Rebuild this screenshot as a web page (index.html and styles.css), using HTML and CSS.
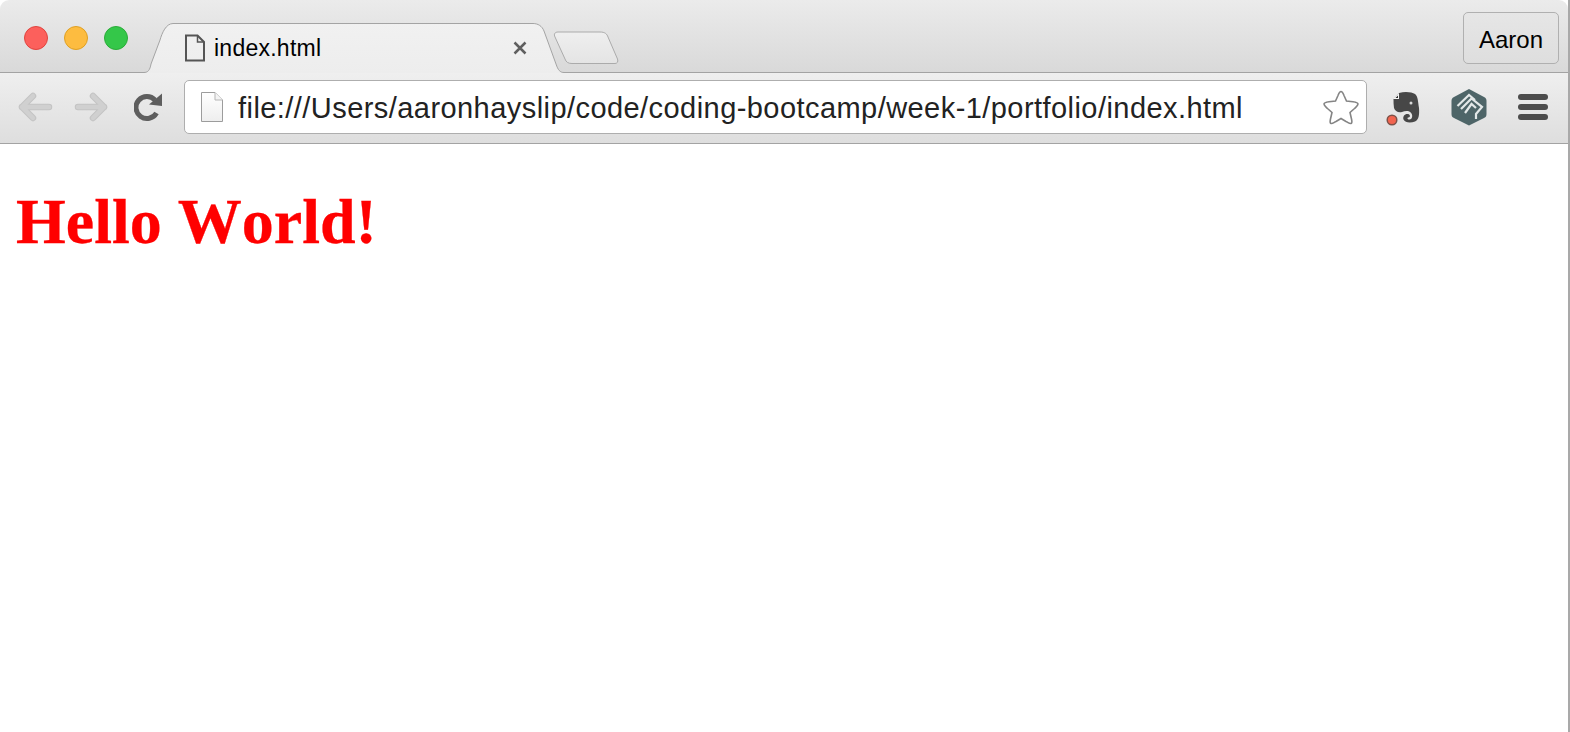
FILE: index.html

```html
<!doctype html>
<html lang="en">

<head>
  <meta charset="utf-8">
  <title>Hello World!</title>
  <link rel="stylesheet" href="styles.css">
</head>

<body>
  <div class="window">
    <header class="tabstrip">
      <div class="lights">
        <span class="light red"></span>
        <span class="light yellow"></span>
        <span class="light green"></span>
      </div>

      <div class="tab">
        <svg class="tab-shape" width="420" height="50" viewBox="0 0 420 50">
          <defs>
            <linearGradient id="tabfill" x1="0" y1="0" x2="0" y2="1">
              <stop offset="0" stop-color="#f1f1f1"/>
              <stop offset="1" stop-color="#ededed"/>
            </linearGradient>
          </defs>
          <path d="M0 50 V49.500 C4 49.500 6 47 7 41 L16 17 C18 10 22 .5 29 .5 L389 .5 C394 .5 398 3 400 8 L412 41 C414 47 416 49.500 420 49.500 V50 Z" fill="url(#tabfill)"/>
          <path d="M0 49.500 C4 49.500 6 47 7 41 L16 17 C18 10 22 .5 29 .5 L389 .5 C394 .5 398 3 400 8 L412 41 C414 47 416 49.500 420 49.500" fill="none" stroke="#a4a4a4"/>
        </svg>
        <svg class="tab-icon" width="22" height="28" viewBox="0 0 22 28">
          <path d="M2 1.500 H13.500 L20 8 V26.500 H2 Z" fill="none" stroke="#555" stroke-width="2"/>
          <path d="M13.500 1.500 V8 H20" fill="none" stroke="#555" stroke-width="1.500"/>
        </svg>
        <span class="tab-title">index.html</span>
        <svg class="tab-close" width="14" height="14" viewBox="0 0 14 14">
          <path d="M1.500 1.500 L12.500 12.500 M12.500 1.500 L1.500 12.500" stroke="#5f5f5f" stroke-width="2.500"/>
        </svg>
      </div>

      <svg class="newtab" width="66" height="34" viewBox="0 0 66 34">
        <defs>
          <linearGradient id="newfill" x1="0" y1="0" x2="0" y2="1">
            <stop offset="0" stop-color="#efefef"/>
            <stop offset="1" stop-color="#e4e4e4"/>
          </linearGradient>
        </defs>
        <path d="M5 1 H47 C52 1 54 3 55 6 L64.500 28 C65.500 31 64 32.500 62 32.500 H19 C15 32.500 13 31 12 28 L2 6 C.5 3 2 1 5 1 Z" fill="url(#newfill)" stroke="#ababab"/>
      </svg>

      <button class="profile">Aaron</button>
    </header>

    <nav class="toolbar">
      <svg class="nav-icon back" width="36" height="30" viewBox="0 0 36 30">
        <path d="M16 4 L5 15 L16 26 M5 15 H32" fill="none" stroke="#c4c4c4" stroke-width="6.500" stroke-linecap="round" stroke-linejoin="round"/>
        <path d="M16 4 L5 15 L16 26 M5 15 H32" fill="none" stroke="#d0d0d0" stroke-width="4.500" stroke-linecap="round" stroke-linejoin="round"/>
      </svg>
      <svg class="nav-icon forward" width="36" height="30" viewBox="0 0 36 30">
        <path d="M19 4 L30 15 L19 26 M4 15 H30" fill="none" stroke="#c4c4c4" stroke-width="6.500" stroke-linecap="round" stroke-linejoin="round"/>
        <path d="M19 4 L30 15 L19 26 M4 15 H30" fill="none" stroke="#d0d0d0" stroke-width="4.500" stroke-linecap="round" stroke-linejoin="round"/>
      </svg>
      <svg class="nav-icon reload" width="30" height="30" viewBox="0 0 30 30">
        <path d="M22.500 21 A11 11 0 1 1 21 8" fill="none" stroke="#5e5e5e" stroke-width="5"/>
        <path d="M15 12.500 L28 1.500 V14 Z" fill="#5e5e5e"/>
      </svg>

      <div class="omnibox">
        <svg class="page-icon" width="24" height="32" viewBox="0 0 24 32">
          <defs>
            <linearGradient id="pagefill" x1="0" y1="0" x2="0" y2="1">
              <stop offset="0" stop-color="#ffffff"/>
              <stop offset="1" stop-color="#eeeeee"/>
            </linearGradient>
          </defs>
          <path d="M1.500 1.500 H15 L22.500 9 V30.500 H1.500 Z" fill="url(#pagefill)" stroke="#9c9c9c"/>
          <path d="M15 1.500 V9 H22.500" fill="#f4f4f4" stroke="#b5b5b5"/>
        </svg>
        <span class="url">file:///Users/aaronhayslip/code/coding-bootcamp/week-1/portfolio/index.html</span>
        <svg class="star" width="36" height="36" viewBox="0 0 36 36">
          <path d="M18 2.500 C19.500 2.500 20 4 21 6.500 L23.500 12 L30 12.800 C33 13.200 35 13.500 35 15 C35 16.500 33.500 17.500 31.500 19.500 L27 23.500 L28.500 30 C29 32.500 29.500 34 28 34.500 C26.800 35 25 33.500 23 32.500 L18 29.500 L13 32.500 C11 33.500 9.200 35 8 34.500 C6.500 34 7 32.500 7.500 30 L9 23.500 L4.500 19.500 C2.500 17.500 1 16.500 1 15 C1 13.500 3 13.200 6 12.800 L12.500 12 L15 6.500 C16 4 16.500 2.500 18 2.500 Z" fill="#fff" stroke="#858585" stroke-width="1.600"/>
        </svg>
      </div>

      <svg class="ext evernote" width="38" height="38" viewBox="0 0 38 38">
        <g transform="translate(0 2)">
          <path d="M14 3 C20 1 27 2 30 4 C33 6 33 12 34 18 C34.500 24 34 30 30 31.500 C26 33 20 33 18.500 29.500 C17.500 26 20 23.500 23 24 C25.500 24.500 25.500 27.500 23.500 27.500 C22 27.500 22 29.500 24.500 29.500 C27 29.500 28 26 26.500 23.500 C24 20 20 21 17 22 C13 23 10 21 9 18 C8.500 15 8.500 12 8.500 9 Z" fill="#474747"/>
          <path d="M8 9 L14 3 V9 Z" fill="#f4f4f4"/>
          <path d="M10.500 8 L13 5.500 V8 Z" fill="#2c2c2c"/>
          <circle cx="26" cy="13" r="1.500" fill="#d8d8d8"/>
          <circle cx="7" cy="30" r="4.800" fill="#f2644f" stroke="#7d5148" stroke-width="1.500"/>
        </g>
      </svg>

      <svg class="ext hexagon" width="36" height="38" viewBox="0 0 36 38">
        <path d="M18 1 L33 9 C35 10 35.500 11 35.500 13 V26 C35.500 28 35 29 33 30 L18 37.500 L3 30 C1 29 .5 28 .5 26 V13 C.5 11 1 10 3 9 Z" fill="#4e6568"/>
        <path d="M6.500 18 L18 7 L24 12 M10 21 L20.500 10.500 L31 19 L25 26 V31 M14 25 L20.500 16 L25 20" fill="none" stroke="#e3e8e8" stroke-width="2.200"/>
      </svg>

      <div class="menu">
        <span class="menu-bar"></span>
        <span class="menu-bar"></span>
        <span class="menu-bar"></span>
      </div>
    </nav>

    <main class="content">
      <h1 class="hello">Hello World!</h1>
    </main>
  </div>
</body>

</html>
```

FILE: styles.css

```css
html { background-color:#fff; }
body { margin:0; height:732px; overflow:hidden; font-family:"Liberation Sans",Arial,sans-serif; }

.window { width:1568px; height:732px; border-right:solid 2px #a9a9a9; background-color:#fff; }

.tabstrip { display:flex; align-items:flex-start; height:72px; border-bottom:solid 1px #a3a3a3; border-radius:9px 9px 0 0; background:linear-gradient(#ebebeb,#d9d9d9); }

.lights { display:flex; gap:16px; padding:26px 0 0 24px; }
.light { width:24px; height:24px; border-radius:50%; box-sizing:border-box; border:solid 1px; }
.red { background-color:#fc605c; border-color:#e0443e; }
.yellow { background-color:#fdbc40; border-color:#dfa023; }
.green { background-color:#34c749; border-color:#2aac38; }

.tab { position:relative; display:flex; align-items:center; flex:none; width:420px; height:50px; margin:23px 0 0 16px; box-sizing:border-box; padding:0 37px 0 40px; }
.tab-shape { position:absolute; left:0; top:0; }
.tab-icon { position:relative; flex:none; }
.tab-title { position:relative; flex:1; margin:1px 0 0 8px; font-size:23px; letter-spacing:.25px; color:#000; }
.tab-close { position:relative; flex:none; }

.newtab { flex:none; margin:31px 0 0 -11px; }

.profile { width:96px; height:52px; margin:12px 9px 0 auto; padding:4px 0 0; border:solid 1px #b0b0b0; border-radius:5px; background:linear-gradient(#e6e6e6,#dedede); font-family:inherit; font-size:24px; color:#000; }

.toolbar { display:flex; align-items:center; height:68px; padding-bottom:2px; border-bottom:solid 1px #a3a3a3; background:linear-gradient(#efefef,#dedede); }
.nav-icon { flex:none; }
.back { margin-left:17px; }
.forward { margin-left:21px; }
.reload { margin-left:24px; }

.omnibox { display:flex; align-items:center; flex:none; width:1183px; height:54px; margin-left:20px; box-sizing:border-box; padding:0 7px 0 15px; border:solid 1px #aeaeae; border-radius:5px; background-color:#fff; }
.page-icon { flex:none; }
.url { flex:1; margin:2px 0 0 14px; font-size:29px; letter-spacing:.44px; color:#222; white-space:nowrap; }
.star { flex:none; }

.ext { flex:none; }
.evernote { margin-left:18px; }
.hexagon { margin-left:28px; }

.menu { display:flex; flex-direction:column; gap:4px; width:30px; margin-left:31px; }
.menu-bar { height:6px; border-radius:3px; background-color:#4c4c4c; }

.content { padding:1px 16px; }
.hello { margin:40px 0 0; font-family:"Liberation Serif","Times New Roman",serif; font-size:64px; font-weight:bold; font-kerning:none; line-height:74px; color:#f00; -webkit-text-stroke:.3px #f00; }
```
